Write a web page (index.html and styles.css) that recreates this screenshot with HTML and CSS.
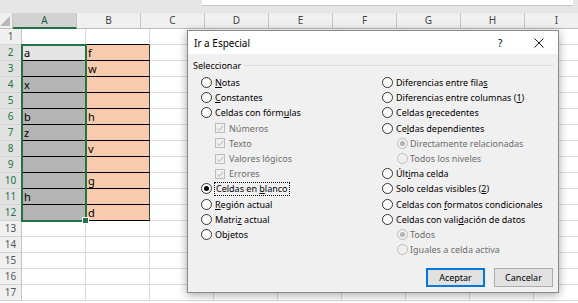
FILE: index.html
```html
<!DOCTYPE html>
<html lang="es">
  <head>
    <meta charset="UTF-8" />
    <title>Ir a Especial</title>
    <link rel="stylesheet" href="styles.css">
  </head>
  <body>
    <div class="topbar"><div class="formula"></div></div>

    <div class="sheet">
      <div class="row head">
        <div class="corner">
          <svg width="10" height="10" viewBox="0 0 10 10"><path d="M10 0V10H0Z" fill="#b9b9b9"/></svg>
        </div>
        <div class="ch sel">A</div>
        <div class="ch">B</div>
        <div class="ch">C</div>
        <div class="ch">D</div>
        <div class="ch">E</div>
        <div class="ch">F</div>
        <div class="ch">G</div>
        <div class="ch">H</div>
        <div class="ch">I</div>
      </div>
      <div class="row"><div class="rh">1</div><div class="c"></div><div class="c edge"></div><div class="rest"></div></div>
      <div class="row"><div class="rh on">2</div><div class="c a active">a</div><div class="c b">f</div><div class="rest"></div></div>
      <div class="row"><div class="rh on">3</div><div class="c a"></div><div class="c b">w</div><div class="rest"></div></div>
      <div class="row"><div class="rh on">4</div><div class="c a">x</div><div class="c b"></div><div class="rest"></div></div>
      <div class="row"><div class="rh on">5</div><div class="c a"></div><div class="c b"></div><div class="rest"></div></div>
      <div class="row"><div class="rh on">6</div><div class="c a">b</div><div class="c b">h</div><div class="rest"></div></div>
      <div class="row"><div class="rh on">7</div><div class="c a">z</div><div class="c b"></div><div class="rest"></div></div>
      <div class="row"><div class="rh on">8</div><div class="c a"></div><div class="c b">v</div><div class="rest"></div></div>
      <div class="row"><div class="rh on">9</div><div class="c a"></div><div class="c b"></div><div class="rest"></div></div>
      <div class="row"><div class="rh on">10</div><div class="c a"></div><div class="c b">g</div><div class="rest"></div></div>
      <div class="row"><div class="rh on">11</div><div class="c a">h</div><div class="c b"></div><div class="rest"></div></div>
      <div class="row"><div class="rh on">12</div><div class="c a"></div><div class="c b">d</div><div class="rest"></div></div>
      <div class="row"><div class="rh">13</div><div class="c"></div><div class="c"></div><div class="rest"></div></div>
      <div class="row"><div class="rh">14</div><div class="c"></div><div class="c"></div><div class="rest"></div></div>
      <div class="row"><div class="rh">15</div><div class="c"></div><div class="c"></div><div class="rest"></div></div>
      <div class="row"><div class="rh">16</div><div class="c"></div><div class="c"></div><div class="rest"></div></div>
      <div class="row"><div class="rh">17</div><div class="c"></div><div class="c"></div><div class="rest"></div></div>

      <!-- rango seleccionado A2:A12 -->
      <div class="selection"><span class="handle"></span></div>
    </div>

    <div class="dialog">
      <div class="titlebar">
        <span class="title">Ir a Especial</span>
        <span class="help">?</span>
        <svg class="close" width="10" height="10" viewBox="0 0 10 10"><path d="M0.5 0.5L9.5 9.5M9.5 0.5L0.5 9.5" stroke="#1a1a1a" stroke-width="1"/></svg>
      </div>
      <div class="body">
        <div class="group"><span>Seleccionar</span><span class="line"></span></div>
        <div class="cols">
          <div class="col left">
            <div class="opt"><span class="radio"></span><span><u>N</u>otas</span></div>
            <div class="opt"><span class="radio"></span><span><u>C</u>onstantes</span></div>
            <div class="opt"><span class="radio"></span><span>Celdas con fórm<u>u</u>las</span></div>
            <div class="opt sub off"><span class="check"><svg width="9" height="9" viewBox="0 0 9 9"><path d="M1.5 4.5L3.7 6.8L7.8 1.8" fill="none" stroke="#a8a8a8" stroke-width="1"/></svg></span><span>Números</span></div>
            <div class="opt sub off"><span class="check"><svg width="9" height="9" viewBox="0 0 9 9"><path d="M1.5 4.5L3.7 6.8L7.8 1.8" fill="none" stroke="#a8a8a8" stroke-width="1"/></svg></span><span>Texto</span></div>
            <div class="opt sub off"><span class="check"><svg width="9" height="9" viewBox="0 0 9 9"><path d="M1.5 4.5L3.7 6.8L7.8 1.8" fill="none" stroke="#a8a8a8" stroke-width="1"/></svg></span><span>Valores lógicos</span></div>
            <div class="opt sub off"><span class="check"><svg width="9" height="9" viewBox="0 0 9 9"><path d="M1.5 4.5L3.7 6.8L7.8 1.8" fill="none" stroke="#a8a8a8" stroke-width="1"/></svg></span><span>Errores</span></div>
            <div class="opt"><span class="radio checked"></span><span class="focus">Celdas en <u>b</u>lanco</span></div>
            <div class="opt"><span class="radio"></span><span><u>R</u>egión actual</span></div>
            <div class="opt"><span class="radio"></span><span>Matri<u>z</u> actual</span></div>
            <div class="opt"><span class="radio"></span><span>Ob<u>j</u>etos</span></div>
          </div>
          <div class="col">
            <div class="opt"><span class="radio"></span><span>Diferencias entre fila<u>s</u></span></div>
            <div class="opt"><span class="radio"></span><span>Diferencias entre columnas (<u>1</u>)</span></div>
            <div class="opt"><span class="radio"></span><span>Celdas <u>p</u>recedentes</span></div>
            <div class="opt"><span class="radio"></span><span>Ce<u>l</u>das dependientes</span></div>
            <div class="opt sub2 off"><span class="radio checked"></span><span>Directamente relacionadas</span></div>
            <div class="opt sub2 off"><span class="radio"></span><span>Todos los niveles</span></div>
            <div class="opt"><span class="radio"></span><span>Últ<u>i</u>ma celda</span></div>
            <div class="opt"><span class="radio"></span><span>Solo celdas visibles (<u>2</u>)</span></div>
            <div class="opt"><span class="radio"></span><span>Celdas con <u>f</u>ormatos condicionales</span></div>
            <div class="opt"><span class="radio"></span><span>Celdas con vali<u>d</u>ación de datos</span></div>
            <div class="opt sub2 off"><span class="radio checked"></span><span>Todos</span></div>
            <div class="opt sub2 off"><span class="radio"></span><span>Iguales a celda activa</span></div>
          </div>
        </div>
        <div class="buttons">
          <button class="btn default">Aceptar</button>
          <button class="btn">Cancelar</button>
        </div>
      </div>
    </div>
  </body>
</html>
```

FILE: styles.css
```css
/* hoja de calculo de fondo */
body {
  margin: 0;
  padding: 0;
  width: 578px;
  height: 303px;
  overflow: hidden;
  background: #ffffff;
  font-family: "Noto Sans", Arial, sans-serif;
  position: relative;
}

.topbar {
  height: 13px;
  background: #e6e6e6;
  padding-left: 202px;
  box-sizing: border-box;
}

.formula {
  height: 5px;
  width: 371px;
  background: #ffffff;
  border-bottom: 1px solid #c6c6c6;
}

.sheet {
  position: relative;
}

.row {
  display: flex;
  height: 16px;
}

.head {
  background: #f0f0f0;
}

.corner {
  width: 22px;
  height: 16px;
  box-sizing: border-box;
  border-right: 1px solid #c6c6c6;
  border-bottom: 1px solid #bcbcbc;
  display: flex;
  align-items: flex-end;
  justify-content: flex-end;
  padding: 0 2px 2px 0;
}

.ch {
  width: 64px;
  flex: none;
  height: 16px;
  box-sizing: border-box;
  border-right: 1px solid #c6c6c6;
  border-bottom: 1px solid #bcbcbc;
  font-size: 10px;
  line-height: 15px;
  text-align: center;
  color: #444444;
}

.ch.sel {
  background: #d2d2d2;
  color: #1e5e39;
  border-bottom: 2px solid #217346;
}

.rh {
  width: 22px;
  flex: none;
  height: 16px;
  box-sizing: border-box;
  background: #f0f0f0;
  border-right: 1px solid #c6c6c6;
  border-bottom: 1px solid #d4d4d4;
  font-size: 10px;
  line-height: 15px;
  text-align: center;
  color: #555555;
}

.rh.on {
  background: #e1e1e1;
  color: #217346;
}

.c {
  width: 64px;
  flex: none;
  height: 16px;
  box-sizing: border-box;
  border-right: 1px solid #dadada;
  border-bottom: 1px solid #dadada;
  font-size: 11px;
  line-height: 15px;
  padding-left: 2px;
  color: #000000;
}

.c.edge {
  border-bottom-color: #000000;
}

.c.a {
  background: #b4b4b4;
  border-bottom-color: #000000;
}

.c.a.active {
  background: #e4e4e4;
}

.c.b {
  background: #f8cbad;
  border-bottom-color: #000000;
  border-right-color: #3c3c3c;
}

.rest {
  flex: 1;
  height: 16px;
  box-sizing: border-box;
  border-bottom: 1px solid #dadada;
  background: repeating-linear-gradient(to right, transparent 0 63px, #dadada 63px 64px);
}

.selection {
  position: absolute;
  left: 21px;
  top: 31px;
  width: 66px;
  height: 178px;
  box-sizing: border-box;
  border: 2px solid #217346;
}

.handle {
  position: absolute;
  right: -4px;
  bottom: -4px;
  width: 5px;
  height: 5px;
  background: #217346;
  border: 1px solid #ffffff;
}

/* dialogo */
.dialog {
  position: absolute;
  left: 187px;
  top: 30px;
  width: 372px;
  height: 263px;
  box-sizing: border-box;
  border: 1px solid #8a8a8a;
  background: #f0f0f0;
  box-shadow: 0 2px 9px rgba(0, 0, 0, 0.35);
  display: flex;
  flex-direction: column;
  font-size: 9px;
  color: #000000;
}

.titlebar {
  height: 23px;
  background: #ffffff;
  display: flex;
  align-items: center;
  padding-left: 6px;
  flex: none;
}

.title {
  flex: 1;
  font-size: 10px;
}

.help {
  font-size: 10px;
  width: 36px;
}

.close {
  margin-right: 14px;
}

.body {
  flex: 1;
  display: flex;
  flex-direction: column;
  padding: 5px 4px 5px 5px;
}

.group {
  display: flex;
  align-items: center;
  gap: 4px;
  height: 13px;
}

.line {
  flex: 1;
  border-top: 1px solid #dcdcdc;
}

.cols {
  display: flex;
  padding-left: 8px;
  margin-top: 3px;
}

.col.left {
  width: 181px;
}

.opt {
  display: flex;
  align-items: center;
  height: 15.2px;
  gap: 3px;
  white-space: nowrap;
}

.opt.sub {
  padding-left: 14px;
  gap: 4px;
}

.opt.sub2 {
  padding-left: 15px;
  gap: 2px;
}

.off {
  color: #6d6d6d;
}

.radio {
  width: 11px;
  height: 11px;
  box-sizing: border-box;
  border: 1px solid #333333;
  border-radius: 50%;
  background: #ffffff;
  flex: none;
  position: relative;
}

.radio.checked::after {
  content: "";
  position: absolute;
  left: 2px;
  top: 2px;
  width: 5px;
  height: 5px;
  border-radius: 50%;
  background: #000000;
}

.off .radio {
  border-color: #bcbcbc;
  background: #f0f0f0;
}

.off .radio.checked::after {
  background: #b4b4b4;
}

.check {
  width: 10px;
  height: 10px;
  box-sizing: border-box;
  border: 1px solid #bcbcbc;
  background: #f0f0f0;
  flex: none;
  display: flex;
}

.check svg {
  margin: 0;
}

.focus {
  outline: 1px dotted #000000;
  padding: 0 1px;
  line-height: 12px;
}

.buttons {
  margin-top: auto;
  display: flex;
  justify-content: flex-end;
  gap: 9px;
  padding-right: 1px;
}

.btn {
  width: 59px;
  height: 19px;
  box-sizing: border-box;
  background: #e1e1e1;
  border: 1px solid #adadad;
  font-family: "Noto Sans", Arial, sans-serif;
  font-size: 9px;
  color: #000000;
  padding: 0;
}

.btn.default {
  border: 2px solid #0078d7;
}
```
